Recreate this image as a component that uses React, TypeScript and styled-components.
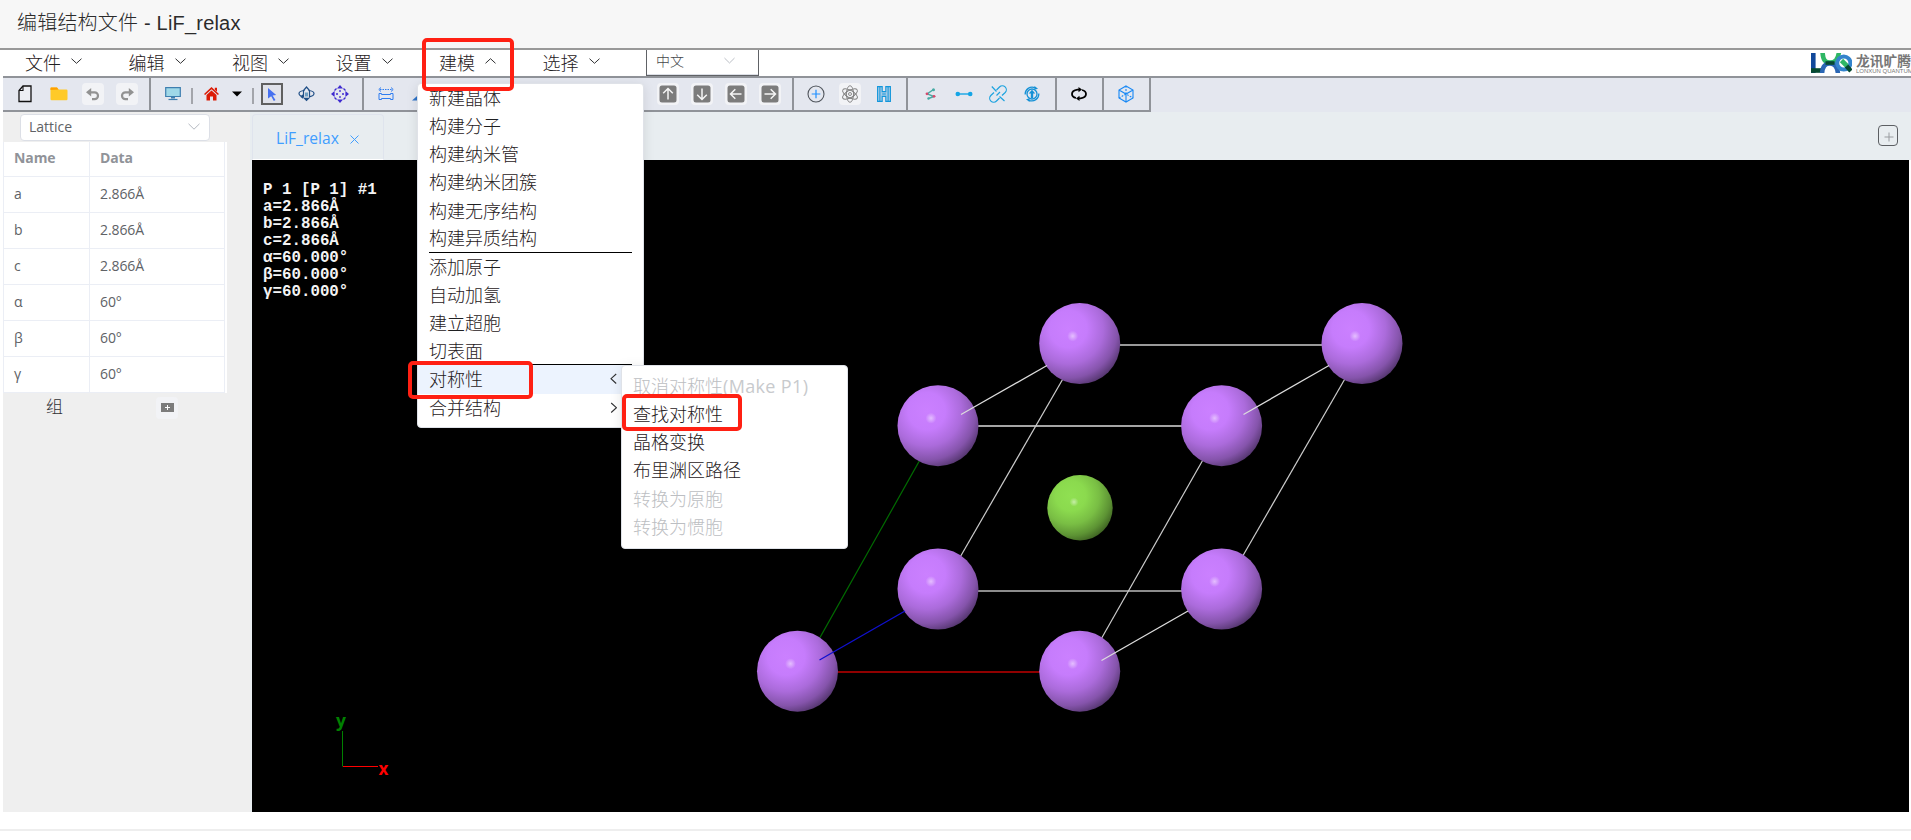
import React from 'react';
import styled, { createGlobalStyle, css } from 'styled-components';

const CJK = `"Open Sans", "Noto Sans CJK SC", sans-serif`;

const GlobalStyle = createGlobalStyle`
  * { box-sizing: border-box; }
  body { margin: 0; background: #fff; font-family: ${CJK}; color: #303133; overflow: hidden; }
`;

const Page = styled.div`
  display: flex;
  flex-direction: column;
  height: 840px;
  width: 1911px;
  position: relative;
`;

const Header = styled.header`
  height: 50px;
  flex: none;
  padding: 0 0 5px 17px;
  display: flex;
  align-items: center;
  background: #f7f7f7;
  border-bottom: 2px solid #999;
  font: 20px "Liberation Sans", "Noto Sans CJK SC", sans-serif;
  font-weight: 300;
  letter-spacing: 0.2px;
  color: #2b2b2b;
  white-space: pre;
`;

const MenuBar = styled.nav`
  height: 28px;
  flex: none;
  margin-left: 3px;
  display: flex;
  align-items: flex-start;
  border-bottom: 2px solid #909399;
`;

const MenuItem = styled.div`
  width: 103.5px;
  height: 26px;
  padding-left: 22px;
  display: flex;
  align-items: center;
  gap: 10px;
  font-size: 18px;
  font-weight: 300;
  line-height: 26px;
  color: #1f2022;
`;

const MenuArrow = styled.svg`
  width: 11px;
  height: 6px;
  margin-bottom: 4px;
  fill: none;
  stroke: #303133;
`;

const LangSelect = styled.div`
  width: 113px;
  height: 26px;
  margin-left: 22px;
  padding: 0 23px 4px 9px;
  display: flex;
  align-items: center;
  justify-content: space-between;
  border: 1px solid #606266;
  border-top: 0;
  font-size: 14px;
  font-weight: 300;
  color: #45474b;
  line-height: 22px;
  box-shadow: inset 0 -1px 0 #dcdfe6;
`;

const Logo = styled.div`
  margin-left: auto;
  padding-top: 3px;
  display: flex;
  gap: 4px;
  width: 100px;
`;

const LogoText = styled.div`
  display: flex;
  flex-direction: column;
  width: 55px;
  color: #777;
`;

const LogoName = styled.span`
  font: bold 13.75px/15px "Noto Sans CJK SC", sans-serif;
  white-space: nowrap;
`;

const LogoSub = styled.span`
  font: 6px/6px "Liberation Sans", sans-serif;
  white-space: nowrap;
  letter-spacing: -0.02px;
`;

const ToolBar = styled.div`
  height: 34px;
  flex: none;
  margin-left: 3px;
  display: flex;
  background: #e4e7ef;
`;

const ToolGroup = styled.div<{ $w: number }>`
  width: ${p => p.$w}px;
  height: 34px;
  padding: 0 5px;
  display: flex;
  align-items: center;
  border-right: 2px solid #909399;
  border-bottom: 2px solid #909399;
`;

const Cell = styled.div<{ $w?: number }>`
  width: ${p => p.$w ?? 34}px;
  height: 32px;
  flex: none;
  display: flex;
  align-items: center;
  justify-content: center;
`;

const Tile = styled.div<{ $active?: boolean }>`
  width: 22px;
  height: 22px;
  border-radius: 4px;
  background: #f2f3f6;
  display: flex;
  align-items: center;
  justify-content: center;
  ${p => p.$active && css`
    border: 2px solid #606060;
    border-radius: 0;
    background: #e0e2ea;
  `}
`;

const Bar = styled.i<{ $shift?: number }>`
  width: 2px;
  height: 16px;
  margin-top: 4px;
  margin-left: ${p => p.$shift ?? 0}px;
  background: #a3a5ab;
`;

const Spacer = styled.div`
  flex: 1;
`;

const Body = styled.main`
  height: 700px;
  flex: none;
  margin-left: 3px;
  display: flex;
`;

const Side = styled.aside`
  width: 249px;
  background: #efefef;
  border-right: 2px solid #e8edf0;
  padding-top: 2px;
`;

const LatticeSelect = styled.div`
  width: 190px;
  height: 27px;
  margin-left: 17px;
  padding: 0 9px 2px 8px;
  border: 1px solid #dcdfe6;
  border-radius: 4px;
  background: #fff;
  display: flex;
  align-items: center;
  justify-content: space-between;
  font-size: 14px;
  color: #606266;
`;

const Table = styled.div`
  width: 224px;
  margin-top: 1px;
  background: #fff;
  padding-right: 2px;
  border-left: 1px solid #ebeef5;
`;

const Row = styled.div<{ $head?: boolean }>`
  height: ${p => (p.$head ? 35 : 36)}px;
  display: grid;
  grid-template-columns: 86px 1fr;
  font-size: 14px;
  line-height: ${p => (p.$head ? 31 : 33)}px;
  font-weight: ${p => (p.$head ? 700 : 400)};
  color: ${p => (p.$head ? '#909399' : '#606266')};
  border-bottom: 1px solid #ebeef5;
`;

const Td = styled.div`
  padding-left: 10px;
  border-right: 1px solid #ebeef5;
  letter-spacing: -0.1px;
`;

const GroupRow = styled.div`
  display: flex;
  align-items: center;
  height: 29px;
  padding-left: 43px;
  gap: 93px;
  font-size: 17px;
  font-weight: 300;
  line-height: 25px;
`;

const GroupLabel = styled.span`
  padding-bottom: 2px;
`;

const Main = styled.section`
  flex: 1;
  display: flex;
  flex-direction: column;
`;

const Tabs = styled.div`
  height: 48px;
  padding: 2px 13px 0 0;
  background: #e8edf0;
  display: flex;
  justify-content: space-between;
`;

const Tab = styled.div`
  width: 132px;
  height: 46px;
  padding: 1px 0 0 23px;
  display: flex;
  align-items: center;
  gap: 11px;
  border: 1px solid #dfe4ed;
  border-bottom-color: #fff;
  border-radius: 4px 4px 0 0;
  font-size: 15.6px;
  color: #409eff;
`;

const TabClose = styled.svg`
  margin-top: 3px;
`;

const AddTab = styled.div`
  width: 20px;
  height: 21px;
  margin-top: 11px;
  border: 1px solid #5c5f63;
  border-radius: 4px;
  display: flex;
  align-items: center;
  justify-content: center;
  padding: 3px 0 0 2px;
`;

const Canvas = styled.div`
  height: 652px;
  width: 1657px;
  background: #000;
  position: relative;
`;

const Scene = styled.svg`
  display: block;
`;

const CellInfo = styled.pre`
  position: absolute;
  left: 11px;
  top: 22px;
  margin: 0;
  font: bold 15.8px/17px "Liberation Mono", monospace;
  color: #f4f4f4;
`;

const Footer = styled.div`
  margin-top: 17px;
  height: 2px;
  background: #eee;
`;

const Popup = styled.div<{ $x: number; $y: number; $w: number; $h: number; $pad?: number }>`
  position: absolute;
  left: ${p => p.$x}px;
  top: ${p => p.$y}px;
  width: ${p => p.$w}px;
  height: ${p => p.$h}px;
  padding-top: ${p => p.$pad ?? 0}px;
  background: #fff;
  border: 1px solid #dfe2e8;
  border-radius: 4px;
  box-shadow: 0 2px 12px rgba(0, 0, 0, 0.1);
`;

const PopItem = styled.div<{ $active?: boolean; $off?: boolean }>`
  height: 28.15px;
  padding: 0 11px;
  background: ${p => (p.$active ? '#ecf3fe' : 'transparent')};
  color: ${p => (p.$off ? '#bcbec2' : '#1f2022')};
  font-size: 18px;
  font-weight: 300;
  line-height: 28px;
  white-space: nowrap;
`;

const PopInner = styled.div<{ $line?: boolean }>`
  height: 100%;
  display: flex;
  align-items: center;
  justify-content: space-between;
  padding-right: 15px;
  border-bottom: ${p => (p.$line ? '1px solid #000' : '0')};
`;

const Latin = styled.span`
  font-weight: 400;
  letter-spacing: 0.35px;
  color: #c8cacd;
`;

const Marker = styled.div<{ $x: number; $y: number; $w: number; $h: number }>`
  position: absolute;
  left: ${p => p.$x}px;
  top: ${p => p.$y}px;
  width: ${p => p.$w}px;
  height: ${p => p.$h}px;
  border: 4px solid #ff2013;
  border-radius: 5px;
`;

const Chevron = ({ up }: { up?: boolean }) => (
  <MenuArrow viewBox="0 0 11 6"><path d={up ? 'M.5 5.3 5.5.7l5 4.6' : 'M.5.7l5 4.6 5-4.6'} /></MenuArrow>
);

const SelectArrow = ({ w = 12 }: { w?: number }) => (
  <svg width={w} height="7" viewBox="0 0 12 7" fill="none" stroke="#b4b8c0"><path d="M.5.8 6 6.2 11.5.8" /></svg>
);

const SideArrow = ({ left }: { left?: boolean }) => (
  <svg width="7" height="12" viewBox="0 0 7 12" fill="none" stroke="#303133" strokeWidth="1.1">
    <path d={left ? 'M6.2 1 1 5.7l5.2 4.8' : 'M1.2 1 6.4 5.7l-5.2 4.8'} />
  </svg>
);

const FileIcon = () => (
  <svg width="14" height="18" viewBox="0 0 14 18"><path d="M5 1h8v15.5H1V5.5z" fill="#eceef3" stroke="#111" strokeWidth="1.3" /><path d="M5 1v4.5H1" fill="none" stroke="#111" strokeWidth="1.1" /></svg>
);
const FolderIcon = () => (
  <svg width="18" height="14" viewBox="0 0 18 14"><path d="M1 .5h6l1.6 2H16a1.3 1.3 0 0 1 1.5 1.3V12a1.2 1.2 0 0 1-1.2 1.2H1.7A1.2 1.2 0 0 1 .5 12V1.2z" fill="#ffca28" /><path d="M.5 3V1q0-.5.6-.5H7l1.6 2z" fill="#ffa000" /></svg>
);
const UndoIcon = ({ flip }: { flip?: boolean }) => (
  <svg width="14" height="13" viewBox="0 0 14 13"><g transform={flip ? 'translate(14 0) scale(-1 1)' : undefined}><path d="M0 4.3 5.2 0v8.6z" fill="#929292" /><path d="M4 4.3h4.6a3.3 3.3 0 0 1 0 6.8H6" fill="none" stroke="#929292" strokeWidth="2.2" /></g></svg>
);
const MonitorIcon = () => (
  <svg width="16" height="14" viewBox="0 0 16 14"><path d="M.7.7h14.6v8.8H.7z" fill="#9fd8e8" stroke="#3e7fb0" strokeWidth="1.2" /><path d="M6 10h4v1.5H6z" fill="#3e7fb0" /><path d="M3.5 12.5h9" stroke="#3e7fb0" strokeWidth="1.2" /></svg>
);
const HomeIcon = () => (
  <svg width="15" height="14" viewBox="0 0 15 14" fill="#dc1c06"><path d="M7.5 0 15 7l-1.1 1.1L7.5 2.2 1.1 8.1 0 7z" /><path d="M10.8.7h2.2v4L10.8 2.7zM7.5 3.4l5 4.6v5.6H9V9.4H6v4.2H2.5V8z" /></svg>
);
const PointerIcon = () => (
  <svg width="11" height="13" viewBox="0 0 11 13" fill="#4670f0"><path d="M1 0l8.2 7-3.6.5L8.5 12l-1.7 1-2.6-4.7L1 10.6z" /></svg>
);
const RotateIcon = () => (
  <svg width="17" height="16" viewBox="0 0 17 16" fill="none" stroke="#1f4e86" strokeWidth="1.2">
    <path d="M6.5 4.5Q1 5 1 7.5T6 10.8M10.5 4.5Q16 5 16 7.5T11 10.8" />
    <path d="M5.5 11.5V4.5L8.5 1l3 3.5v7" />
    <path d="M5 11.8h7l-3.5 3.5z" fill="#1f4e86" stroke="none" />
    <path d="M7 6.5h3v4H7z" fill="#6f9ec0" stroke="none" />
    <path d="M5 8.3v4.5l-2.800-2z" fill="#1f4e86" stroke="none" />
  </svg>
);
const MoveIcon = () => (
  <svg width="18" height="18" viewBox="0 0 18 18" fill="#3f2bd0"><path d="M9 0l3 3.6H6zM9 18l3-3.6H6zM0 9l3.6-3v6zM18 9l-3.6-3v6z" /><path d="M3.5 5.5l2-2M12.5 3.5l2 2M14.5 12.5l-2 2M5.5 14.5l-2-2M9 5v2M9 11v2M5 9h2M11 9h2" stroke="#3f2bd0" strokeWidth="1.3" /></svg>
);
const MeasureIcon = () => (
  <svg width="16" height="14" viewBox="0 0 16 14" fill="none" stroke="#2f7df0" strokeWidth="1.1"><path d="M2 2.5h12" strokeDasharray="1.5 1" /><path d="M3 .5.8 2.5 3 4.5M13 .5l2.2 2L13 4.5M1 6.5h2.5v1h9v-1H15v6h-2.5v-1h-9v1H1z" strokeWidth="1" /></svg>
);
const AngleIcon = () => (
  <svg width="17" height="14" viewBox="0 0 17 14"><path d="M0 13.5 14 1v12.5z" fill="#2f74c8" /></svg>
);
const ArrowTile = ({ deg }: { deg: number }) => (
  <Tile><svg width="18" height="18" viewBox="0 0 18 18"><rect x=".5" y=".5" width="17" height="17" rx="2.5" fill="#7c7c7c" /><path d="M9 14.5V3.5M4.2 8.3 9 3.5l4.8 4.8" fill="none" stroke="#f5f5f5" strokeWidth="1.5" transform={`rotate(${deg} 9 9)`} /></svg></Tile>
);
const CirclePlusIcon = () => (
  <svg width="18" height="18" viewBox="0 0 18 18" fill="none"><circle cx="9" cy="9" r="8" stroke="#50555c" strokeWidth="1.1" /><path d="M9 4.7v8.6M4.7 9h8.6" stroke="#1f8fff" strokeWidth="1.2" /></svg>
);
const AtomIcon = () => (
  <svg width="18" height="18" viewBox="0 0 18 18" fill="none" stroke="#7f7f7f" strokeWidth=".9">
    {[0, 60, 120].map(a => <ellipse key={a} cx="9" cy="9" rx="3.6" ry="8.3" transform={`rotate(${a} 9 9)`} />)}
    <circle cx="9" cy="9" r="4.2" strokeWidth=".7" /><circle cx="9" cy="9" r="1.5" />
  </svg>
);
const HIcon = () => (
  <svg width="14" height="16" viewBox="0 0 14 16"><path d="M.6.6h4.6v5h3.6v-5h4.6v14.8H8.8v-5H5.2v5H.6z" fill="#a6cbe6" stroke="#1296db" strokeWidth="1.1" /><path d="M2.9 1v14M11.1 1v14M5.2 8h3.6" stroke="#1296db" strokeWidth="1" /></svg>
);
const BondIcon = () => (
  <svg width="11" height="12" viewBox="0 0 11 12"><path d="M8.5 1.5 2.2 5.8 9 8.5 3.5 10.5" fill="none" stroke="#46aaa4" strokeWidth="1.4" /><circle cx="8.5" cy="1.8" r="1.5" fill="#46aaa4" /><circle cx="2" cy="5.8" r="1.4" fill="#d8486c" /><circle cx="9" cy="8.3" r="1.4" fill="#d8486c" /><circle cx="3.5" cy="10.5" r="1.2" fill="#46aaa4" /></svg>
);
const LinkIcon = () => (
  <svg width="18" height="6" viewBox="0 0 18 6" fill="#14a5e6"><circle cx="2.8" cy="3" r="2.3" /><circle cx="15.2" cy="3" r="2.3" /><path d="M3 2.3h12v1.4H3z" /></svg>
);
const UnlinkIcon = () => (
  <svg width="18" height="18" viewBox="0 0 18 18" fill="none" stroke="#1da3df" strokeWidth="1.2">
    <path d="M7.5 5 10.5 2a3.9 3.9 0 0 1 5.7 5.5L13 10.5M10.5 13l-3 3A3.9 3.9 0 0 1 1.8 10.5L5 7.5" />
    <path d="M2.8 1.5 7.5 6.5M10.5 11.5l5 4.5M7.5 10.5l3.5-3.5" />
  </svg>
);
const SyncIcon = () => (
  <svg width="16" height="16" viewBox="0 0 16 16" fill="none" stroke="#1591d6">
    <circle cx="8" cy="8" r="5" strokeWidth="1.3" />
    <path d="M1.2 8.5A7 7 0 0 1 11 1.7M14.8 7.5A7 7 0 0 1 5 14.3" strokeWidth="1.3" />
    <path d="M10.5 0l3.5 2.8-3.7 1zM5.5 16 2 13.2l3.7-1z" fill="#1591d6" stroke="none" />
    <path d="M8 3.8l3.3 3.7H9.2V12H6.8V7.5H4.7z" fill="#1591d6" stroke="none" />
  </svg>
);
const LoopIcon = () => (
  <svg width="18" height="14" viewBox="0 0 18 14"><g fill="none" stroke="#000" strokeWidth="1.8"><path d="M9.5 2.6H7.5Q2 3.5 2 7q0 3 4 4" /><path d="M8.5 11.4h2Q16 10.5 16 7q0-3-4-4" /></g><path d="M8.5 0l3.5 2.6L8.5 5.2zM9.5 8.8 6 11.4l3.5 2.6z" /></svg>
);
const CubeIcon = () => (
  <svg width="16" height="18" viewBox="0 0 16 18" fill="none" stroke="#1788f5" strokeWidth="1.1"><path d="M8 1l7 4v8l-7 4-7-4V5zM1 5l7 4 7-4M8 9v8" /><path d="M8 1v8M1 13l7-4 7 4" strokeDasharray="1.8 1.3" /></svg>
);

const LogoMark = () => (
  <svg width="41" height="20" viewBox="0 0 41 20" fill="none" strokeWidth="4.6">
    <path d="M2.3 0v20" stroke="#12489a" /><path d="M0 17.5h10" stroke="#064a30" />
    <path d="M11.5-1C12 7 14 9.5 19 9.5S27 7 28-1" stroke="#2fb765" />
    <path d="M11 21C11.5 13 14 10.5 19 10.5S26.5 14 27 21" stroke="#2a66b4" />
    <path d="M14.5 10h9" stroke="#064a30" strokeWidth="3.6" />
    <circle cx="32.8" cy="10" r="6.6" stroke="#3484cc" strokeWidth="4" />
    <path d="M30.5 7.5l5.5 5.5" stroke="#2fb765" /><path d="M35.5 13l4.5 5" stroke="#064a30" />
  </svg>
);

const menus = ['文件', '编辑', '视图', '设置', '建模', '选择'];
const lattice = [['a', '2.866Å'], ['b', '2.866Å'], ['c', '2.866Å'], ['α', '60°'], ['β', '60°'], ['γ', '60°']];
const modelling = ['新建晶体', '构建分子', '构建纳米管', '构建纳米团簇', '构建无序结构', '构建异质结构', '添加原子', '自动加氢', '建立超胞', '切表面', '对称性', '合并结构'];
const symmetry = ['取消对称性', '查找对称性', '晶格变换', '布里渊区路径', '转换为原胞', '转换为惯胞'];

const atoms = [[1079.7, 343.6], [1362, 343.6], [938, 425.7], [1221.6, 425.7], [938, 589], [1221.6, 589], [797.5, 671.2], [1079.7, 671.2]];
const edges: [number, number, number, number, string][] = [
  [1115, 345, 1327, 345, '#ccc'], [973, 426, 1186, 426, '#ddd'], [973, 591, 1186, 591, '#bbb'], [833, 672, 1045, 672, '#c00000'],
  [1064, 377, 959, 559, '#ccc'], [1346, 377, 1241, 559, '#ccc'], [1204, 458, 1100, 641, '#ccc'], [921, 458, 818, 641, '#006c00'],
];
const frontEdges: [number, number, number, number, string][] = [
  [961, 414.5, 1047, 365.5, '#ddd'], [1243.5, 414.5, 1329, 365.5, '#ddd'],
  [819.5, 660, 905, 611, '#1010d0'], [1101.5, 660.5, 1188, 611, '#ddd'],
];

const Structure = () => (
  <Scene width="1657" height="652" viewBox="252 160 1657 652">
    <defs>
      <radialGradient id="violet" cx=".36" cy=".32" r=".72">
        <stop offset="0" stopColor="#cb80ff" /><stop offset=".32" stopColor="#c67cfc" /><stop offset=".6" stopColor="#ab6bdb" /><stop offset=".84" stopColor="#8554ab" /><stop offset="1" stopColor="#583873" />
      </radialGradient>
      <radialGradient id="lime" cx=".36" cy=".32" r=".72">
        <stop offset="0" stopColor="#90e052" /><stop offset=".32" stopColor="#8bda4e" /><stop offset=".6" stopColor="#79be44" /><stop offset=".84" stopColor="#5d9334" /><stop offset="1" stopColor="#416724" />
      </radialGradient>
      <radialGradient id="shine"><stop offset="0" stopColor="#fff" stopOpacity=".5" /><stop offset="1" stopColor="#fff" stopOpacity="0" /></radialGradient>
    </defs>
    {edges.map(([a, b, c, d, s], i) => <line key={i} x1={a} y1={b} x2={c} y2={d} stroke={s} strokeWidth={b === d ? 1.5 : 1.2} />)}
    {atoms.map(([x, y], i) => (
      <g key={i}><circle cx={x} cy={y} r="40.5" fill="url(#violet)" /><circle cx={x - 7} cy={y - 7.5} r="5.5" fill="url(#shine)" /></g>
    ))}
    <circle cx="1080" cy="507.7" r="32.7" fill="url(#lime)" /><circle cx="1074" cy="502" r="4.5" fill="url(#shine)" />
    {frontEdges.map(([a, b, c, d, s], i) => <line key={i} x1={a} y1={b} x2={c} y2={d} stroke={s} strokeWidth="1.3" />)}
    <path d="M342.5 731v35.5" stroke="#008000" /><path d="M343 766.5h35" stroke="#f00" />
    <text x="336" y="727" fill="#008000" fontFamily="Open Sans" fontWeight="700" fontSize="17.5">y</text>
    <text x="378.5" y="775" fill="#f00" fontFamily="Open Sans" fontWeight="700" fontSize="17">x</text>
  </Scene>
);

export default function App() {
  return (
    <Page>
      <GlobalStyle />
      <Header>编辑结构文件 - LiF_relax</Header>
      <MenuBar>
        {menus.map(m => <MenuItem key={m}>{m}<Chevron up={m === '建模'} /></MenuItem>)}
        <LangSelect>中文<SelectArrow w={11} /></LangSelect>
        <Logo><LogoMark /><LogoText><LogoName>龙讯旷腾</LogoName><LogoSub>LONXUN QUANTUM</LogoSub></LogoText></Logo>
      </MenuBar>
      <ToolBar>
        <ToolGroup $w={148}>
          <Cell><FileIcon /></Cell><Cell><FolderIcon /></Cell>
          <Cell><Tile><UndoIcon /></Tile></Cell><Cell><Tile><UndoIcon flip /></Tile></Cell>
        </ToolGroup>
        <ToolGroup $w={213}>
          <Cell><MonitorIcon /></Cell><Cell $w={4}><Bar /></Cell><Cell><HomeIcon /></Cell>
          <Cell $w={18}><svg width="10" height="6" viewBox="0 0 10 6"><path d="M0 .5h10l-5 5z" /></svg></Cell>
          <Cell $w={9}><Bar $shift={5} /></Cell>
          <Cell><Tile $active><PointerIcon /></Tile></Cell><Cell><RotateIcon /></Cell><Cell><MoveIcon /></Cell>
        </ToolGroup>
        <ToolGroup $w={430}>
          <Cell><MeasureIcon /></Cell><Cell><AngleIcon /></Cell>
          <Spacer />
          {[0, 180, 270, 90].map(d => <Cell key={d}><ArrowTile deg={d} /></Cell>)}
        </ToolGroup>
        <ToolGroup $w={114}>
          <Cell><CirclePlusIcon /></Cell><Cell><Tile><AtomIcon /></Tile></Cell><Cell><HIcon /></Cell>
        </ToolGroup>
        <ToolGroup $w={149}>
          <Cell><BondIcon /></Cell><Cell><LinkIcon /></Cell><Cell><UnlinkIcon /></Cell><Cell><SyncIcon /></Cell>
        </ToolGroup>
        <ToolGroup $w={47}><Cell><LoopIcon /></Cell></ToolGroup>
        <ToolGroup $w={47}><Cell><CubeIcon /></Cell></ToolGroup>
      </ToolBar>
      <Body>
        <Side>
          <LatticeSelect>Lattice<SelectArrow /></LatticeSelect>
          <Table>
            <Row $head><Td>Name</Td><Td>Data</Td></Row>
            {lattice.map(([n, v]) => <Row key={n}><Td>{n}</Td><Td>{v}</Td></Row>)}
          </Table>
          <GroupRow><GroupLabel>组</GroupLabel><Tile><svg width="13" height="9" viewBox="0 0 13 9"><path d="M0 0h13v9H0z" fill="#7c7c7c" /><path d="M6.5 2v5M4 4.5h5" stroke="#fff" /></svg></Tile></GroupRow>
        </Side>
        <Main>
          <Tabs>
            <Tab>LiF_relax<TabClose width="9" height="9" viewBox="0 0 9 9" stroke="#409eff"><path d="M.5.5l8 8M8.5.5l-8 8" /></TabClose></Tab>
            <AddTab><svg width="10" height="10" viewBox="0 0 10 10" stroke="#999ca0"><path d="M5 .5v9M.5 5h9" /></svg></AddTab>
          </Tabs>
          <Canvas>
            <Structure />
            <CellInfo>{'P 1 [P 1] #1\na=2.866Å\nb=2.866Å\nc=2.866Å\nα=60.000°\nβ=60.000°\nγ=60.000°'}</CellInfo>
          </Canvas>
        </Main>
      </Body>
      <Footer />
      <Popup $x={417} $y={83} $w={227} $h={345}>
        {modelling.map((m, i) => (
          <PopItem key={m} $active={i === 10}>
            <PopInner $line={i === 5 || i === 9}>{m}{i === 10 && <SideArrow left />}{i === 11 && <SideArrow />}</PopInner>
          </PopItem>
        ))}
      </Popup>
      <Popup $x={621} $y={365} $w={227} $h={184} $pad={6}>
        {symmetry.map((m, i) => <PopItem key={m} $off={i === 0 || i > 3}>{m}{i === 0 && <Latin>(Make P1)</Latin>}</PopItem>)}
      </Popup>
      <Marker $x={421.5} $y={37.5} $w={92} $h={53.5} />
      <Marker $x={407.5} $y={360.5} $w={125.5} $h={38} />
      <Marker $x={621.5} $y={393.5} $w={120.5} $h={37.5} />
    </Page>
  );
}
